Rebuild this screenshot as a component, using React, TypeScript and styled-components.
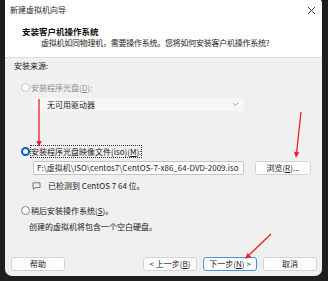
import React from "react";
import styled, { createGlobalStyle } from "styled-components";

const GlobalStyle = createGlobalStyle`
  html, body {
    margin: 0;
    padding: 0;
    background: #1e1e1e;
  }
  body {
    font-family: "Noto Sans CJK SC", "Noto Sans", sans-serif;
    font-size: 8px;
    color: #1b1b1b;
  }
`;

const Screen = styled.div`
  position: relative;
  width: 328px;
  height: 281px;
  overflow: hidden;
  background: #1e1e1e;
  padding-left: 5px;
  box-sizing: border-box;
`;

const Dialog = styled.div`
  width: 317px;
  height: 279px;
  margin-top: -3px;
  border-radius: 2px 7px 7px 7px;
  background: #f0f0f0;
  display: flex;
  flex-direction: column;
  overflow: hidden;
`;

const TitleBar = styled.div`
  height: 23px;
  padding: 3px 6px 0 5px;
  box-sizing: border-box;
  background: #ffffff;
  display: flex;
  align-items: center;
  justify-content: space-between;
  color: #262626;
  line-height: 12px;
`;

const Header = styled.div`
  height: 38px;
  padding: 5px 0 0 17px;
  box-sizing: border-box;
  background: #ffffff;
  border-bottom: 1px solid #dedede;
  line-height: 12px;
`;

const HeadTitle = styled.div`
  font-weight: 700;
  font-size: 8.5px;
  color: #111;
`;

const HeadSub = styled.div`
  margin-left: 19px;
  color: #1b1b1b;
  letter-spacing: -0.25px;
`;

const Body = styled.div`
  flex: 1;
  display: flex;
  flex-direction: column;
  padding: 2px 5px 5px 9px;
  line-height: 12px;
`;

const Row = styled.div<{ $top: number; $indent: number }>`
  display: flex;
  align-items: center;
  margin-top: ${(p) => p.$top}px;
  margin-left: ${(p) => p.$indent}px;
  min-height: 12px;
`;

const Radio = styled.span<{ $checked?: boolean; $disabled?: boolean }>`
  width: 9px;
  height: 9px;
  box-sizing: border-box;
  border-radius: 50%;
  background: #fcfcfc;
  border: ${(p) =>
    p.$checked
      ? "2.5px solid #005fb8"
      : `1px solid ${p.$disabled ? "#c7c7c7" : "#858585"}`};
  margin-right: 1px;
  flex: none;
`;

const Label = styled.span<{ $disabled?: boolean; $focus?: boolean }>`
  color: ${(p) => (p.$disabled ? "#8d8d8d" : "#1b1b1b")};
  outline: ${(p) => (p.$focus ? "1px dotted #333" : "none")};
  outline-offset: 0;
  line-height: 11px;
`;

const U = styled.span`
  text-decoration: underline;
  text-underline-offset: 1px;
`;

const Select = styled.div<{ $disabled?: boolean }>`
  width: 211px;
  height: ${(p) => (p.$disabled ? 13 : 14)}px;
  box-sizing: border-box;
  display: flex;
  align-items: center;
  justify-content: space-between;
  padding: ${(p) => (p.$disabled ? "0 4px 0 13px" : "0 4px 0 3px")};
  background: ${(p) => (p.$disabled ? "#f7f7f7" : "#ffffff")};
  border: 1px solid ${(p) => (p.$disabled ? "#f7f7f7" : "#c4c4c4")};
  border-radius: 2px;
  color: #1b1b1b;
  white-space: nowrap;
`;

const FileRow = styled.div`
  display: flex;
  align-items: center;
  gap: 11px;
  margin-top: 4px;
  margin-left: 19px;
`;

const Button = styled.div<{ $primary?: boolean; $w?: number }>`
  width: ${(p) => p.$w ?? 54}px;
  height: 14px;
  box-sizing: border-box;
  display: flex;
  align-items: center;
  justify-content: center;
  background: #fdfdfd;
  border: 1px solid ${(p) => (p.$primary ? "#4a90d6" : "#d3d3d3")};
  border-radius: 3px;
  color: #1b1b1b;
  line-height: 12px;
`;

const Footer = styled.div`
  margin-top: auto;
  display: flex;
  align-items: center;
  gap: 6px;
  margin-left: -3px;
`;

const Spacer = styled.div`
  flex: 1;
`;

const Overlay = styled.svg`
  position: absolute;
  left: 0;
  top: 0;
  pointer-events: none;
`;

const Chevron = () => (
  <svg width="7" height="5" viewBox="0 0 7 5">
    <path d="M1 1 L3.5 3.5 L6 1" fill="none" stroke="#8a8a8a" strokeWidth="0.8" />
  </svg>
);

const Close = () => (
  <svg width="9" height="9" viewBox="0 0 9 9">
    <path d="M1 1 L8 8 M8 1 L1 8" stroke="#333" strokeWidth="0.9" />
  </svg>
);

const InfoIcon = () => (
  <svg width="9" height="8" viewBox="0 0 9 8" style={{ marginRight: 7 }}>
    <path
      d="M1 0.8 H8 V5.6 H3.2 L1.4 7.3 V5.6 H1 Z"
      fill="none"
      stroke="#555"
      strokeWidth="0.8"
    />
  </svg>
);

const Arrow = ({ x1, y1, x2, y2 }: { x1: number; y1: number; x2: number; y2: number }) => {
  const a = Math.atan2(y2 - y1, x2 - x1);
  const len = 6;
  const w = 2.6;
  const bx = x2 - len * Math.cos(a);
  const by = y2 - len * Math.sin(a);
  const px = -Math.sin(a) * w;
  const py = Math.cos(a) * w;
  return (
    <g>
      <line x1={x1} y1={y1} x2={bx} y2={by} stroke="#ea2027" strokeWidth="1.3" />
      <polygon
        points={`${x2},${y2} ${bx + px},${by + py} ${bx - px},${by - py}`}
        fill="#ea2027"
      />
    </g>
  );
};

export default function App() {
  return (
    <>
      <GlobalStyle />
      <Screen>
        <Dialog>
          <TitleBar>
            <span>新建虚拟机向导</span>
            <Close />
          </TitleBar>
          <Header>
            <HeadTitle>安装客户机操作系统</HeadTitle>
            <HeadSub>虚拟机如同物理机，需要操作系统。您将如何安装客户机操作系统?</HeadSub>
          </Header>
          <Body>
            <div>安装来源:</div>
            <Row $top={9} $indent={7}>
              <Radio $disabled />
              <Label $disabled>
                安装程序光盘(<U>D</U>):
              </Label>
            </Row>
            <Row $top={5} $indent={19}>
              <Select $disabled>
                <span>无可用驱动器</span>
                <Chevron />
              </Select>
            </Row>
            <Row $top={34} $indent={7}>
              <Radio $checked />
              <Label $focus>
                安装程序光盘映像文件(iso)(<U>M</U>):
              </Label>
            </Row>
            <FileRow>
              <Select>
                <span>F:\虚拟机\ISO\centos7\CentOS-7-x86_64-DVD-2009.iso</span>
                <Chevron />
              </Select>
              <Button $w={56}>
                浏览(<U>R</U>)...
              </Button>
            </FileRow>
            <Row $top={5} $indent={18}>
              <InfoIcon />
              <span>已检测到 CentOS 7 64 位。</span>
            </Row>
            <Row $top={12} $indent={7}>
              <Radio />
              <Label>
                稍后安装操作系统(<U>S</U>)。
              </Label>
            </Row>
            <Row $top={5} $indent={15}>
              <span>创建的虚拟机将包含一个空白硬盘。</span>
            </Row>
            <Footer>
              <Button>帮助</Button>
              <Spacer />
              <Button>
                &lt; 上一步(<U>B</U>)
              </Button>
              <Button $primary>
                下一步(<U>N</U>) &gt;
              </Button>
              <Button>取消</Button>
            </Footer>
          </Body>
        </Dialog>
        <Overlay width="328" height="281" viewBox="0 0 328 281">
          <Arrow x1={39} y1={99} x2={39} y2={147} />
          <Arrow x1={301} y1={112} x2={296} y2={158} />
          <Arrow x1={271} y1={234} x2={245} y2={259} />
        </Overlay>
      </Screen>
    </>
  );
}
